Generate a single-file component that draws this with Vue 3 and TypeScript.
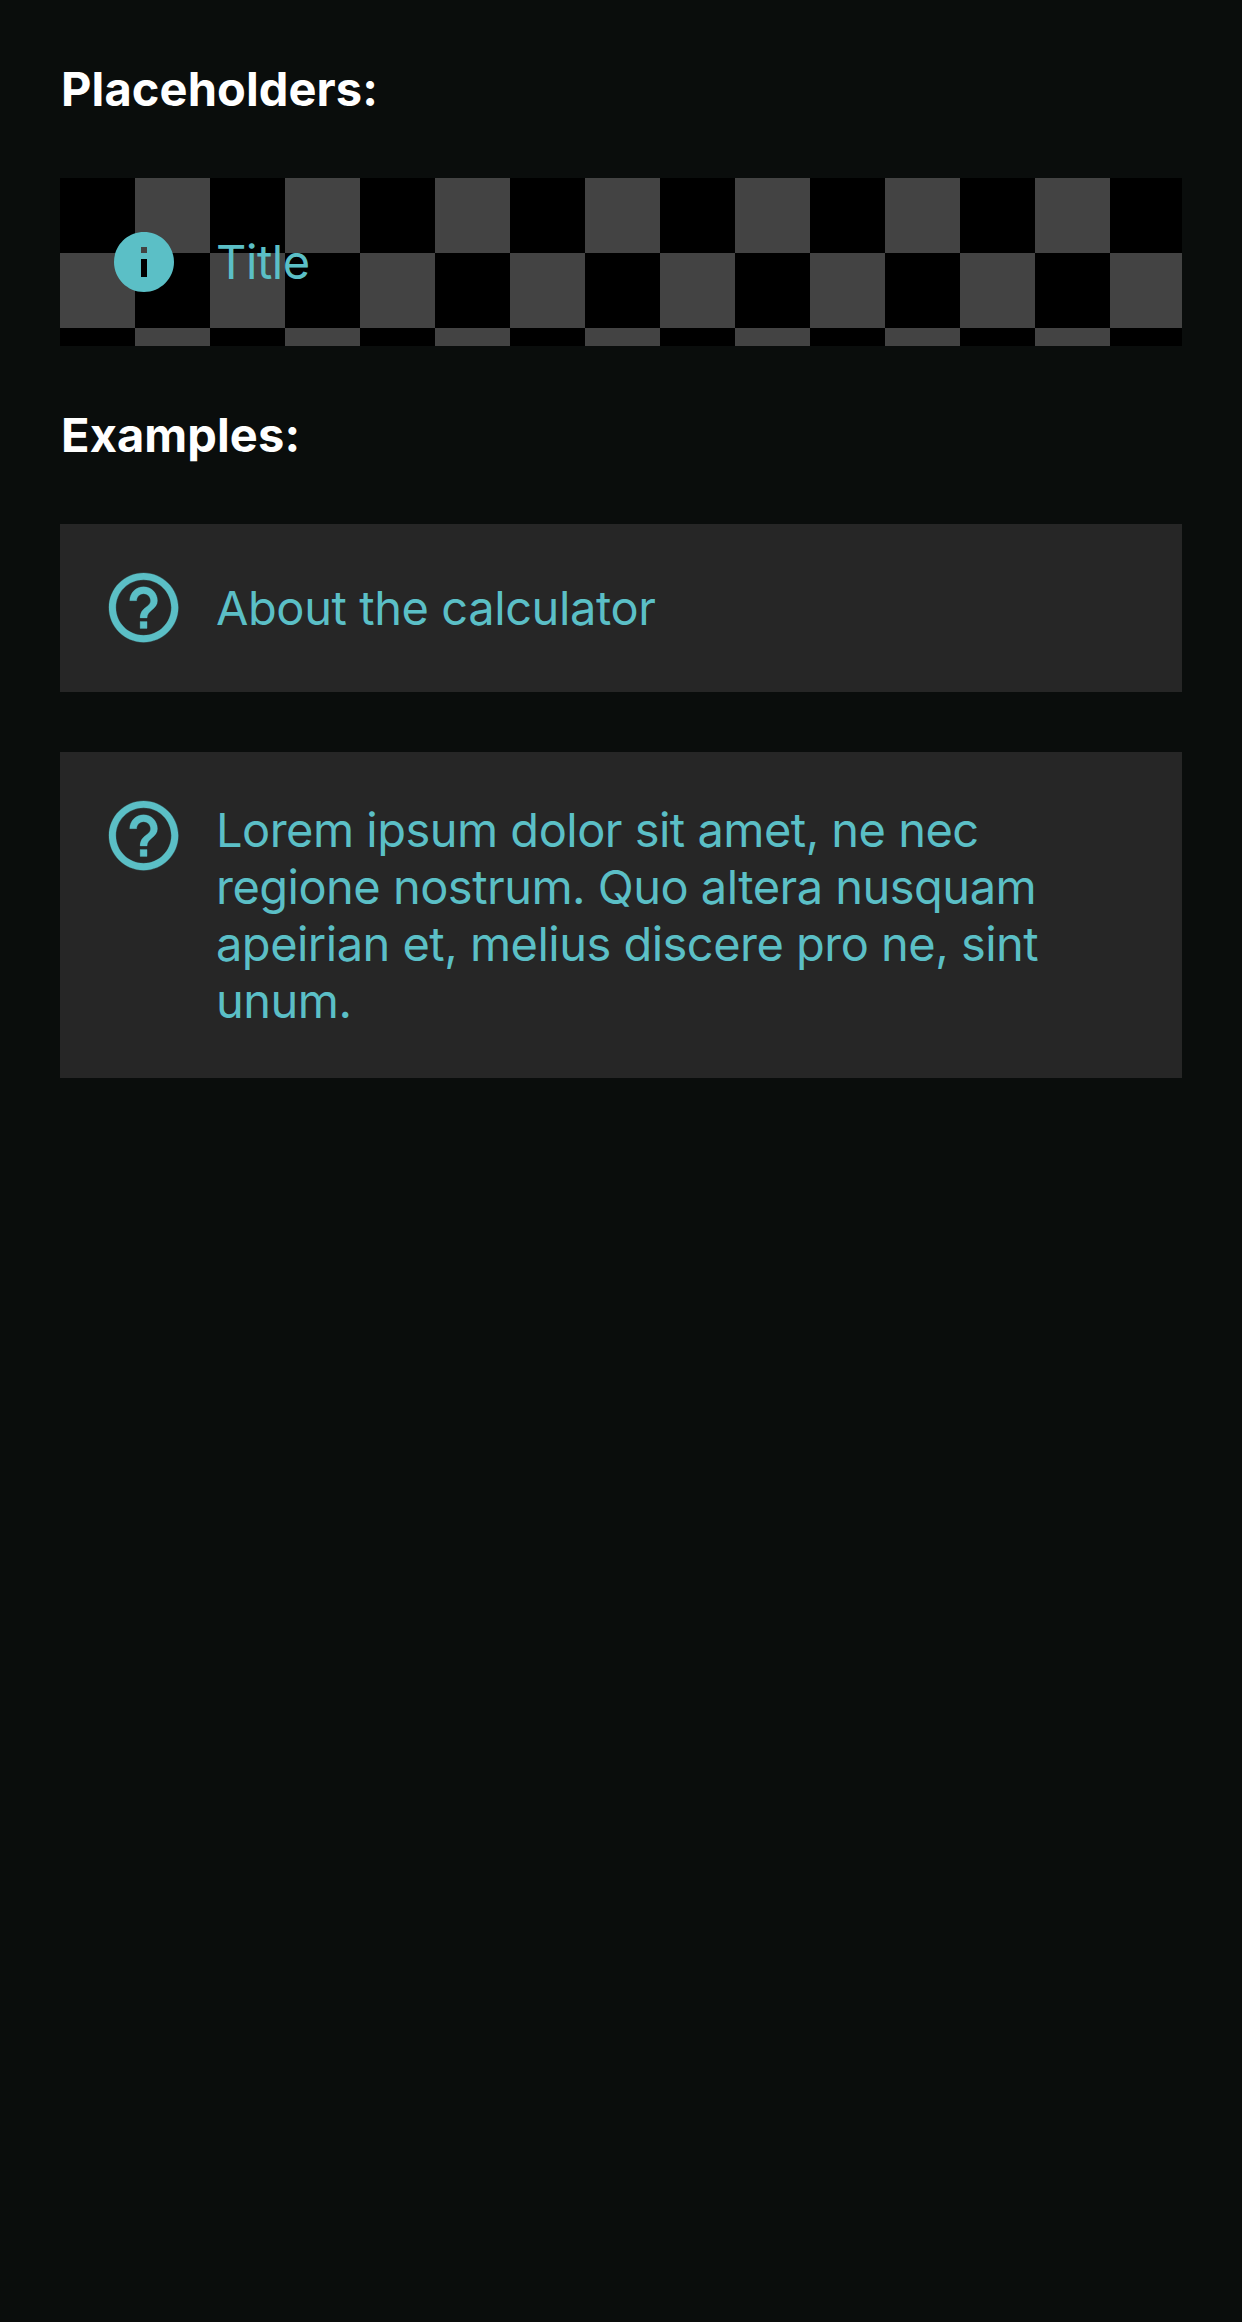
<script setup lang="ts">
interface Example {
  lines: string[]
}

const examples: Example[] = [
  { lines: ['About the calculator'] },
  {
    lines: [
      'Lorem ipsum dolor sit amet, ne nec',
      'regione nostrum. Quo altera nusquam',
      'apeirian et, melius discere pro ne, sint',
      'unum.',
    ],
  },
]
</script>

<template>
  <main class="screen">
    <h2 class="heading">Placeholders:</h2>
    <section class="row checker">
      <div class="icon-slot">
        <svg class="info" viewBox="0 0 24 24">
          <path
            d="M12 2C6.48 2 2 6.48 2 12s4.48 10 10 10 10-4.48 10-10S17.52 2 12 2zm1 15h-2v-6h2v6zm0-8h-2V7h2v2z"
          />
        </svg>
      </div>
      <p class="label"><span class="line">Title</span></p>
    </section>

    <h2 class="heading">Examples:</h2>
    <section v-for="(item, i) in examples" :key="i" class="row panel">
      <div class="icon-slot">
        <svg class="help" viewBox="0 0 24 24">
          <path
            d="M11 18h2v-2h-2v2zm1-16C6.48 2 2 6.48 2 12s4.48 10 10 10 10-4.48 10-10S17.52 2 12 2zm0 18c-4.41 0-8-3.59-8-8s3.59-8 8-8 8 3.59 8 8-3.59 8-8 8zm0-14c-2.21 0-4 1.79-4 4h2c0-1.1.9-2 2-2s2 .9 2 2c0 2-3 1.75-3 5h2c0-2.25 3-2.5 3-5 0-2.21-1.79-4-4-4z"
          />
        </svg>
      </div>
      <p class="label" :class="{ multi: item.lines.length > 1 }">
        <span v-for="line in item.lines" :key="line" class="line">{{ line }}</span>
      </p>
    </section>
  </main>
</template>

<style>
body {
  background: #0a0d0c;
}
</style>

<style scoped>
.screen {
  box-sizing: border-box;
  min-height: 2322px;
  padding: 60px 60px 0;
  background: #0a0d0c;
  font-family: Inter, 'Liberation Sans', sans-serif;
}

.heading {
  height: 58px;
  margin: 0 0 60px;
  padding-left: 1px;
  color: #fff;
  font-size: 47px;
  font-weight: 700;
  line-height: 58px;
  letter-spacing: 0.1px;
}

.row {
  display: flex;
  box-sizing: border-box;
  min-height: 168px;
  margin-bottom: 60px;
  padding: 48px;
  color: #5bbfc6;
}

.checker {
  background: conic-gradient(#434343 25%, #000 0 50%, #434343 0 75%, #000 0) 0 0 / 150px 150px;
}

.panel {
  background: #262626;
}

.icon-slot {
  display: flex;
  flex: none;
  align-items: center;
  justify-content: center;
  width: 72px;
  height: 72px;
  margin-right: 36px;
}

svg {
  flex: none;
  fill: currentColor;
}

.info {
  width: 72px;
  height: 72px;
}

.help {
  width: 83.2px;
  height: 83.2px;
  margin: -1.6px 0 0 -1.6px;
  stroke: currentColor;
  stroke-width: 0.08;
}

.label {
  margin: 0;
  padding-top: 7px;
  font-size: 47px;
  line-height: 57px;
  letter-spacing: -0.42px;
}

.label.multi {
  padding: 1px 0;
  letter-spacing: -0.52px;
}

.line {
  display: block;
  white-space: nowrap;
}
</style>
